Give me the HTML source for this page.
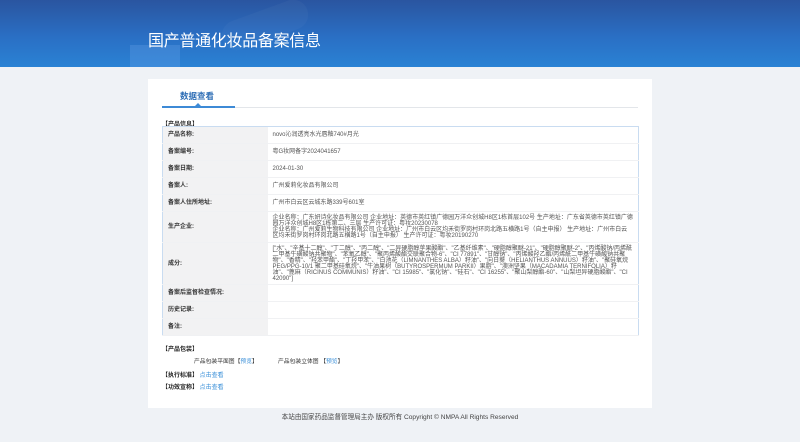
<!DOCTYPE html>
<html><head><meta charset="utf-8"><style>
*{margin:0;padding:0;box-sizing:border-box}
body{width:800px;height:442px;background:#eff2f6;font-family:"Liberation Sans","Noto Sans CJK SC",sans-serif;position:relative;overflow:hidden;color:#333}
.hdr{position:absolute;left:0;top:0;width:800px;height:67px;background:linear-gradient(180deg,#2a55a0 0%,#2a6fc4 55%,#2a82d4 100%);overflow:hidden}
.hdr .s1{position:absolute;left:220px;top:10px;width:90px;height:30px;background:rgba(255,255,255,.03);transform:rotate(-20deg);border-radius:15px}
.hdr .s2{position:absolute;left:130px;top:45px;width:50px;height:25px;background:rgba(120,170,240,.25)}
.hdr h1{position:absolute;left:148px;top:27px;font-size:16px;font-weight:normal;color:#fff;letter-spacing:-0.3px}
.card{position:absolute;left:148px;top:79px;width:504px;height:329px;background:#fff}
.tab{position:absolute;left:32px;top:11px;font-size:8.5px;font-weight:bold;color:#2d6db5}
.line{position:absolute;left:14px;top:28px;width:476px;height:1px;background:#e3e6ea}
.tabl{position:absolute;left:14px;top:27px;width:73px;height:2px;background:#3d8ad6}
.tri{position:absolute;left:47px;top:24px;width:0;height:0;border-left:3px solid transparent;border-right:3px solid transparent;border-bottom:3px solid #3d8ad6}
.sec{position:absolute;font-size:6px;font-weight:bold;color:#222}
table{position:absolute;left:14px;top:47px;width:477px;border:1.5px solid #c9dcf1;border-collapse:collapse;font-size:6px;table-layout:fixed}
td{border-bottom:1px solid #f0f1f3;height:17px;vertical-align:middle;line-height:6px}
td.l{width:105px;background:#f2f2f3;font-weight:bold;padding-left:5px;color:#333}
td.v{padding:0 5px;color:#555}
.t{position:absolute;font-size:5.8px;color:#333}
.a{color:#3a8fd8}
.ft{position:absolute;left:0;top:411px;width:800px;text-align:center;font-size:6.6px;color:#444}
</style></head><body>
<div class="hdr"><div class="s1"></div><div class="s2"></div><h1>国产普通化妆品备案信息</h1></div>
<div class="card">
<div class="tab">数据查看</div>
<div class="line"></div><div class="tabl"></div><div class="tri"></div>
<div class="sec" style="left:14px;top:40px">【产品信息】</div>
<table>
<tr><td class="l">产品名称:</td><td class="v">novo沁润透亮水光唇釉740#月光</td></tr>
<tr><td class="l">备案编号:</td><td class="v">粤G妆网备字2024041657</td></tr>
<tr><td class="l">备案日期:</td><td class="v">2024-01-30</td></tr>
<tr><td class="l">备案人:</td><td class="v">广州爱莉化妆品有限公司</td></tr>
<tr><td class="l">备案人住所地址:</td><td class="v">广州市白云区云城东路339号601室</td></tr>
<tr><td class="l" style="height:31px">生产企业:</td><td class="v">企业名称：广东妍诗化妆品有限公司 企业地址：英德市英红镇广德园万洋众创城H8区1栋首层102号 生产地址：广东省英德市英红镇广德园万洋众创城H8区1栋第二、三层 生产许可证：粤妆20230078<br>企业名称：广州爱莉生物科技有限公司 企业地址：广州市白云区均禾街罗岗村环岗北路五横路1号（自主申报） 生产地址：广州市白云区均禾街罗岗村环岗北路五横路1号（自主申报） 生产许可证：粤妆20190270</td></tr>
<tr><td class="l" style="height:42px">成分:</td><td class="v">["水"、"辛基十二醇"、"丁二醇"、"丙二醇"、"二异硬脂醇苹果酸酯"、"乙基纤维素"、"硬脂醇聚醚-21"、"硬脂醇聚醚-2"、"丙烯酸钠/丙烯酰二甲基牛磺酸钠共聚物"、"苯氧乙醇"、"聚丙烯酸酯交联聚合物-6"、"CI 77891"、"甘醇钠"、"丙烯酸羟乙酯/丙烯酰二甲基牛磺酸钠共聚物"、"香精"、"羟苯甲酯"、"丁羟甲苯"、"白池花（LIMNANTHES ALBA）籽油"、"向日葵（HELIANTHUS ANNUUS）籽油"、"聚硅氧烷PEG/PPG-10/1 聚二甲基硅氧烷"、"牛油果树（BUTYROSPERMUM PARKII）果脂"、"澳洲坚果（MACADAMIA TERNIFOLIA）籽油"、"蓖麻（RICINUS COMMUNIS）籽油"、"CI 15985"、"氯化钠"、"硅石"、"CI 16255"、"聚山梨醇酯-60"、"山梨坦异硬脂酸酯"、"CI 42090"]</td></tr>
<tr><td class="l">备案后监督检查情况:</td><td class="v"></td></tr>
<tr><td class="l">历史记录:</td><td class="v"></td></tr>
<tr><td class="l">备注:</td><td class="v"></td></tr>
</table>
<div class="sec" style="left:14px;top:265px">【产品包装】</div>
<div class="t" style="left:46px;top:277px">产品包装平面图【<span class="a">预览</span>】</div>
<div class="t" style="left:130px;top:277px">产品包装立体图 【<span class="a">预览</span>】</div>
<div class="sec" style="left:14px;top:291px">【执行标准】 <span class="a" style="font-weight:normal">点击查看</span></div>
<div class="sec" style="left:14px;top:303px">【功效宣称】 <span class="a" style="font-weight:normal">点击查看</span></div>
</div>
<div class="ft">本站由国家药品监督管理局主办 版权所有 Copyright © NMPA All Rights Reserved</div>
</body></html>
